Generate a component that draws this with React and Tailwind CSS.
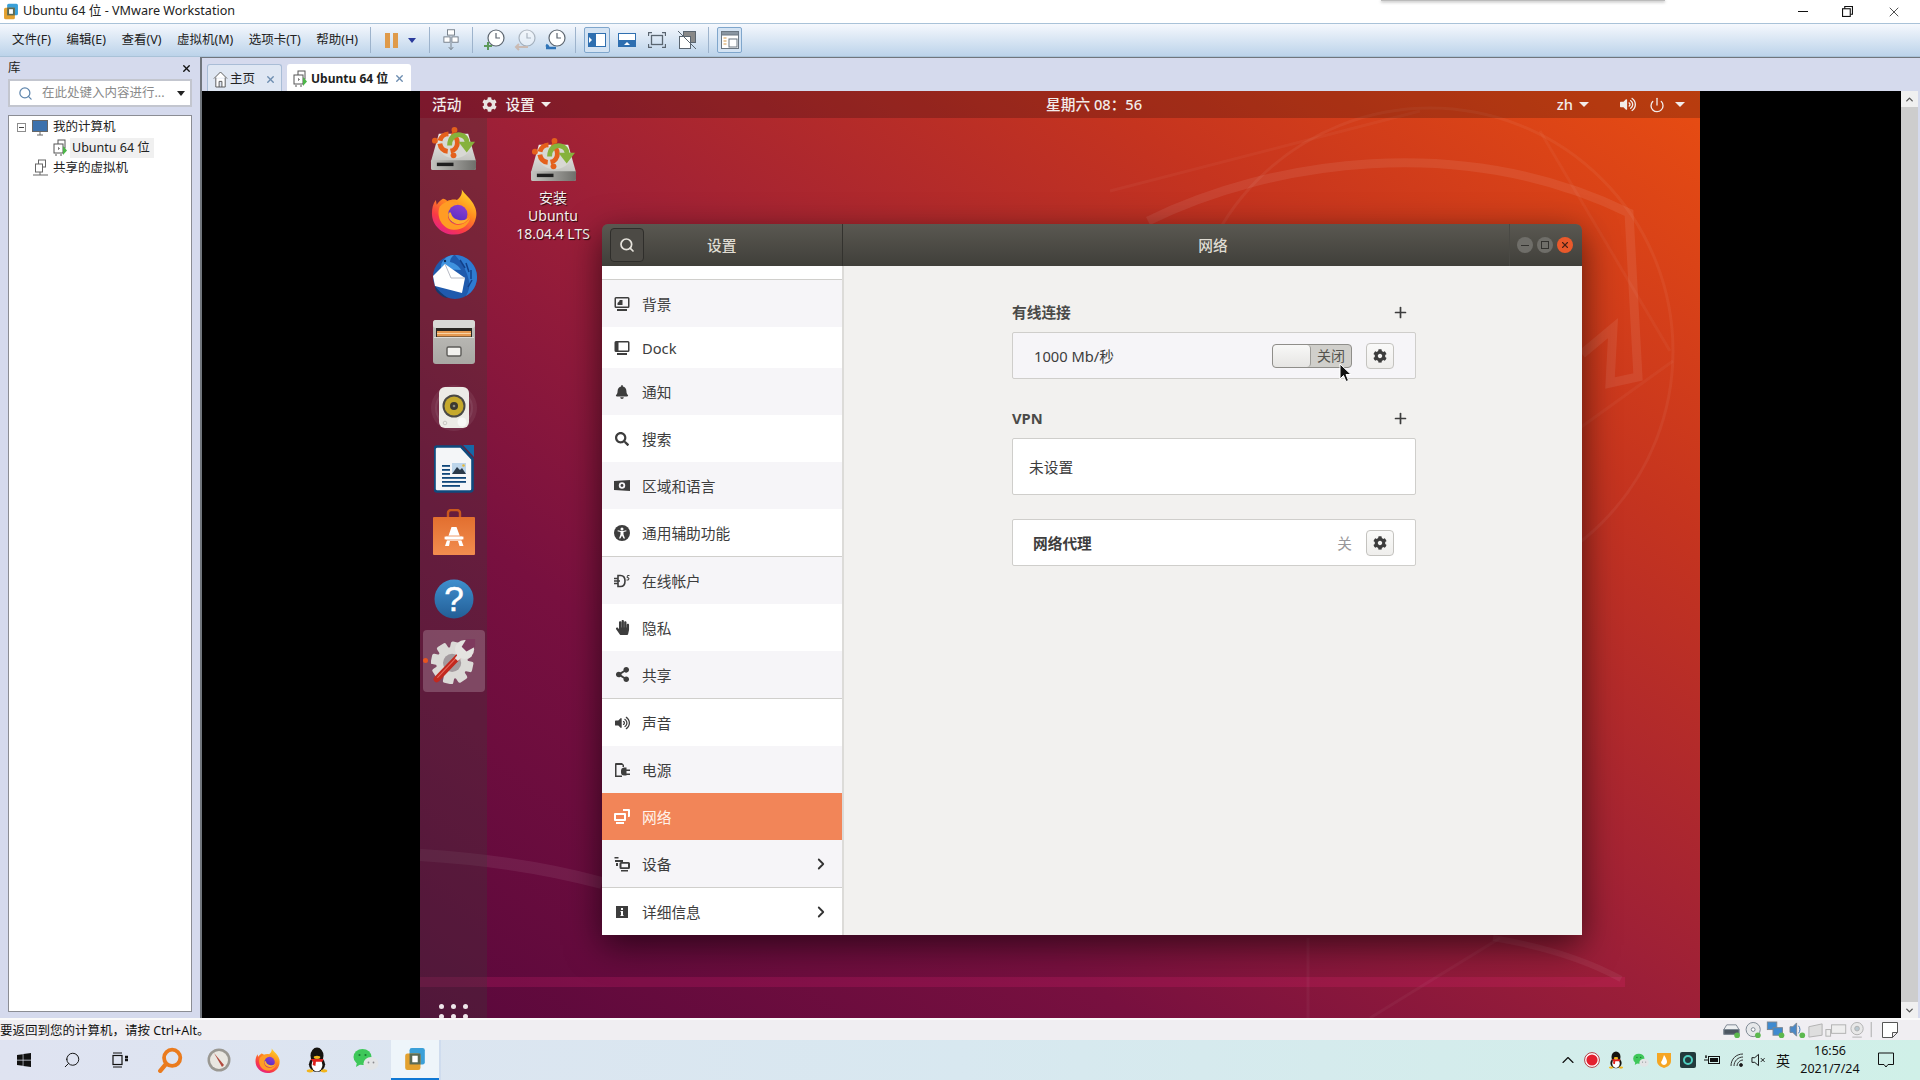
import React from "react";
import { FaBell, FaCog, FaHandPaper, FaSearch, FaShareAlt, FaVolumeUp, FaWindows } from "react-icons/fa";
import { ChevronDown, ChevronRight, ChevronUp, Plus, Power, Search, X } from "lucide-react";

// ---------- app icons (drawings) ----------
const DiskIcon = ({ className = "" }) => (
  <svg viewBox="0 0 48 46" className={className}>
    <defs>
      <linearGradient id="diskTop" x1="0" y1="0" x2="0" y2="1">
        <stop offset="0" stopColor="#efefed" />
        <stop offset="1" stopColor="#b4b4b0" />
      </linearGradient>
      <linearGradient id="diskBand" x1="0" y1="0" x2="1" y2="0">
        <stop offset="0" stopColor="#c4c4c0" />
        <stop offset="1" stopColor="#6f6f6b" />
      </linearGradient>
    </defs>
    <path d="M9 8h30l8 28v7a2 2 0 0 1-2 2H3a2 2 0 0 1-2-2v-7z" fill="url(#diskTop)" />
    <path d="M1 35h46v8a2 2 0 0 1-2 2H3a2 2 0 0 1-2-2z" fill="url(#diskBand)" />
    <path d="M7 37.500h17v3.500H7z" fill="#1f1f1f" />
    <ellipse cx="25" cy="21" rx="16" ry="12" fill="#d8d8d4" />
    <circle cx="19" cy="17" r="9" fill="none" stroke="#e4601c" strokeWidth="5" strokeDasharray="12 3" />
    <circle cx="5" cy="15" r="3" fill="#e4601c" />
    <circle cx="25" cy="4" r="3" fill="#e4601c" />
    <circle cx="24" cy="30" r="3" fill="#e4601c" />
    <path d="M20 20c0-8 5-12 11-11 5 1 7 5 7 9" fill="none" stroke="#86b23c" strokeWidth="5" />
    <path d="M29 16h17l-8.500 11z" fill="#86b23c" />
  </svg>
);

const FirefoxIcon = ({ className = "" }) => (
  <svg viewBox="0 0 48 48" className={className}>
    <defs>
      <linearGradient id="ffBody" x1="0.85" y1="0" x2="0.25" y2="1">
        <stop offset="0" stopColor="#ffdf2b" />
        <stop offset="0.42" stopColor="#ff8b1f" />
        <stop offset="0.75" stopColor="#f93b45" />
        <stop offset="1" stopColor="#e3208a" />
      </linearGradient>
      <linearGradient id="ffGlobe" x1="0.7" y1="0" x2="0.3" y2="1">
        <stop offset="0" stopColor="#8c3fd0" />
        <stop offset="1" stopColor="#4f2bc0" />
      </linearGradient>
    </defs>
    <path d="M32 1c3 5 8 8 11 13 4 6 5 11 4 16-2 11-11 18-23 18C11 48 1 38 1 26c0-5 1-10 4-14l1 5c2-3 4-5 6-6 1-1 4 1 5 2 3-1 7-2 10-1 4-3 6-7 5-11z" fill="url(#ffBody)" />
    <path d="M9 19c4-5 10-7 15-5 3 1 6 4 7 7-5-3-9-2-11 0 3 1 3 2 2 3-3 2-5 3-4 7 1 3 5 7 10 7 6 0 11-4 13-8-1 8-9 14-18 13C12 42 5 30 9 19z" fill="#ff9c24" />
    <circle cx="28" cy="27" r="10" fill="url(#ffGlobe)" />
    <path d="M18 27c0 6 6 10 11 10 6 0 10-4 12-9-2 4-7 6-11 5-5-1-8-3-9-7-1-2-2-1-3 1z" fill="#ffb02e" />
  </svg>
);

const ThunderbirdIcon = ({ className = "" }) => (
  <svg viewBox="0 0 48 48" className={className}>
    <circle cx="25" cy="25" r="22" fill="#1f5aad" />
    <path d="M25 3c12 0 22 10 22 22 0 8-4 15-11 19 3-5 4-10 3-15-2-10-7-18-14-26z" fill="#2f7bd1" />
    <path d="M30 8l5 8M36 11l3 9M41 18l0 9M42 28l-4 7" stroke="#11408a" strokeWidth="1.500" />
    <path d="M11 17c-1-7 5-14 13-14-3 2-4 5-4 7 5 1 9 4 11 8z" fill="#3f93df" />
    <circle cx="15" cy="9" r="1.200" fill="#0d2c5c" />
    <path d="M3 24L15 12l20 14-3 15-27-7z" fill="#fff" />
    <path d="M15 12l6 14 14 0" fill="none" stroke="#b7bac4" strokeWidth="1" />
    <path d="M5 34c3 4 8 9 13 12-3 0-7-2-10-5-2-2-3-4-3-7z" fill="#16396e" />
  </svg>
);

const FilesIcon = ({ className = "" }) => (
  <svg viewBox="0 0 42 44" className={className}>
    <defs>
      <linearGradient id="drawer" x1="0" y1="0" x2="0" y2="1">
        <stop offset="0" stopColor="#c0bfbb" />
        <stop offset="1" stopColor="#a9a8a4" />
      </linearGradient>
    </defs>
    <rect x="0" y="0" width="42" height="44" rx="3" fill="url(#drawer)" />
    <rect x="0" y="0" width="42" height="8" rx="3" fill="#d9d8d5" />
    <rect x="3" y="8" width="36" height="9" fill="#2a2622" />
    <rect x="4" y="11" width="34" height="5.500" fill="#e69a52" />
    <rect x="4" y="13" width="34" height="1" fill="#f7d3a6" />
    <rect x="1" y="17" width="40" height="1" fill="#dcdbd8" />
    <rect x="14" y="27" width="14" height="9" rx="1.500" fill="#f2f1ee" stroke="#5c5b58" strokeWidth="1.400" />
  </svg>
);

const SpeakerIcon = ({ className = "" }) => (
  <svg viewBox="0 0 48 48" className={className}>
    <circle cx="24" cy="24" r="23" fill="#ffffff" opacity="0.07" />
    <circle cx="24" cy="24" r="18" fill="none" stroke="#ffffff" strokeOpacity="0.08" strokeWidth="2" />
    <rect x="9" y="3" width="30" height="41" rx="6" fill="#ecebe6" />
    <circle cx="24" cy="22" r="11.500" fill="#4a4945" />
    <circle cx="24" cy="22" r="9.500" fill="#c5a92c" />
    <circle cx="24" cy="22" r="4" fill="#3a3830" />
    <circle cx="24" cy="22" r="1.300" fill="#8b8a80" />
    <circle cx="32" cy="38" r="4.500" fill="#f8f8f6" />
    <circle cx="15" cy="39" r="1.800" fill="none" stroke="#c8c7c2" />
  </svg>
);

const WriterIcon = ({ className = "" }) => (
  <svg viewBox="0 0 40 48" className={className}>
    <path d="M3 1.500h24L38.500 14v30a2.500 2.500 0 0 1-2.500 2.500H3A2.500 2.500 0 0 1 .5 44V4A2.500 2.500 0 0 1 3 1.500z" fill="#f4f6f8" stroke="#0f4a7d" strokeWidth="2.600" />
    <path d="M29 0h11v12z" fill="#1668a6" />
    <g fill="#10477a">
      <rect x="8" y="20" width="8" height="1.800" />
      <rect x="8" y="24" width="8" height="1.800" />
      <rect x="8" y="28" width="8" height="1.800" />
      <rect x="8" y="32" width="24" height="1.800" />
      <rect x="8" y="36" width="24" height="1.800" />
      <rect x="8" y="40" width="18" height="1.800" />
    </g>
    <rect x="18" y="18" width="14" height="11" fill="#bcd5ea" />
    <path d="M18 29l5-7 3 3 2-2 4 6z" fill="#2a3a4a" />
    <circle cx="29.500" cy="20.500" r="1.300" fill="#e6b93a" />
  </svg>
);

const StoreIcon = ({ className = "" }) => (
  <svg viewBox="0 0 42 46" className={className}>
    <defs>
      <linearGradient id="bag" x1="0" y1="0" x2="0" y2="1">
        <stop offset="0" stopColor="#e26f2f" />
        <stop offset="1" stopColor="#f28d4f" />
      </linearGradient>
    </defs>
    <path d="M15 11V4a3 3 0 0 1 3-3h6a3 3 0 0 1 3 3v7" fill="none" stroke="#c9581d" strokeWidth="2.400" />
    <rect x="0" y="8" width="42" height="38" rx="1" fill="url(#bag)" />
    <path d="M18.500 18h5l7 19h-4l-1.500-5h-8L16 37h-4z" fill="#fff" />
    <rect x="11" y="27" width="20" height="4" rx="2" fill="#fff" stroke="#ee8445" strokeWidth="0.800" />
  </svg>
);

const HelpIcon = ({ className = "" }) => (
  <svg viewBox="0 0 40 40" className={className}>
    <defs>
      <linearGradient id="helpBg" x1="0" y1="0" x2="0" y2="1">
        <stop offset="0" stopColor="#3f8fce" />
        <stop offset="1" stopColor="#235e96" />
      </linearGradient>
    </defs>
    <circle cx="20" cy="20" r="19.500" fill="url(#helpBg)" />
    <text x="20" y="32" textAnchor="middle" fontSize="35" stroke="#fff" strokeWidth="0.500" fill="#fff" fontFamily="Liberation Sans, sans-serif">?</text>
  </svg>
);

const SettingsIcon = ({ className = "" }) => (
  <svg viewBox="0 0 48 48" className={className}>
    <g fill="#dbdad7" transform="rotate(12 22 26)">
      <circle cx="22" cy="26" r="16.500" />
      <rect x="16.500" y="4" width="11" height="44" rx="2" />
      <rect x="0" y="20.500" width="44" height="11" rx="2" />
      <rect x="16.500" y="4" width="11" height="44" rx="2" transform="rotate(45 22 26)" />
      <rect x="16.500" y="4" width="11" height="44" rx="2" transform="rotate(-45 22 26)" />
    </g>
    <circle cx="22" cy="26" r="9.500" fill="#a39a9e" />
    <path d="M6 43L29 19" stroke="#c2291f" strokeWidth="6.500" strokeLinecap="round" />
    <path d="M7 41L27 20" stroke="#e8685c" strokeWidth="1.200" strokeLinecap="round" />
    <circle cx="35" cy="12" r="10" fill="#e4e3e0" />
    <path d="M29 16l-4 5 3 3 5-4z" fill="#e4e3e0" />
    <path d="M37 1l-5 8 5 5 9-5v-8z" fill="#7e3a5e" />
  </svg>
);

const VmIcon = ({ className = "" }) => (
  <svg viewBox="0 0 16 18" className={className}>
    <rect x="6" y="1" width="7" height="8" fill="#fff" stroke="#555" />
    <rect x="2" y="5" width="9" height="9" fill="#fff" stroke="#555" />
    <path d="M6 9.500h2M6.500 8v3" stroke="#777" strokeWidth="0.800" />
    <path d="M11 7l4 4.500-4 4.500z" fill="#4cb648" />
    <path d="M4 15v2M9 15v2" stroke="#555" />
  </svg>
);

const VmwareLogo = ({ className = "" }) => (
  <svg viewBox="0 0 20 22" className={className}>
    <rect x="5" y="1" width="14" height="15" rx="2" fill="#3aa0d8" />
    <rect x="1" y="6" width="14" height="15" rx="2" fill="#e3a12f" />
    <rect x="5" y="6" width="10" height="10" fill="#5a6a55" />
    <rect x="7.500" y="8" width="5" height="6" fill="#fff" />
  </svg>
);

const Penguin = ({ className = "" }) => (
  <svg viewBox="0 0 20 24" className={className}>
    <ellipse cx="10" cy="8" rx="6" ry="7.500" fill="#15130f" />
    <ellipse cx="10" cy="16" rx="7.500" ry="7" fill="#15130f" />
    <ellipse cx="10" cy="16.500" rx="5" ry="6" fill="#fff" />
    <path d="M4 11h12l-1 2.500H9l-.5 4-2.500-1 .5-3z" fill="#e0211c" />
    <ellipse cx="10" cy="9.500" rx="3" ry="1.400" fill="#f2b51b" />
    <ellipse cx="3.500" cy="22" rx="3" ry="1.500" fill="#f2b51b" />
    <ellipse cx="16.500" cy="22" rx="3" ry="1.500" fill="#f2b51b" />
  </svg>
);

const WeChat = ({ className = "" }) => (
  <svg viewBox="0 0 26 24" className={className}>
    <ellipse cx="9.500" cy="9" rx="9" ry="8" fill="#3ec85a" />
    <path d="M4 14l-1 5 5-3z" fill="#3ec85a" />
    <circle cx="6.500" cy="7" r="1.100" fill="#1c7a33" />
    <circle cx="12.500" cy="7" r="1.100" fill="#1c7a33" />
    <ellipse cx="18" cy="15.500" rx="7.500" ry="6.500" fill="#e3e5e6" />
    <circle cx="15.500" cy="14.500" r="0.900" fill="#8b8d90" />
    <circle cx="20.500" cy="14.500" r="0.900" fill="#8b8d90" />
  </svg>
);

// ---------- gnome sidebar glyphs ----------
const Glyph = ({ name, color = "#3d3d3d" }) => {
  const c = "h-[16px] w-[16px]";
  if (name === "bg")
    return (
      <svg viewBox="0 0 16 16" className={c} fill={color}>
        <path d="M2 1h12a1.500 1.500 0 0 1 1.500 1.500v8A1.500 1.500 0 0 1 14 12H2a1.500 1.500 0 0 1-1.500-1.500v-8A1.500 1.500 0 0 1 2 1zm0 1.500v8h12v-8z" />
        <path d="M3.500 9V7l2-2V4h3v5z" />
        <rect x="3" y="13" width="10" height="2" />
      </svg>
    );
  if (name === "dock")
    return (
      <svg viewBox="0 0 16 16" className={c} fill={color}>
        <path d="M2 1h12a1.500 1.500 0 0 1 1.500 1.500v8A1.500 1.500 0 0 1 14 12H2a1.500 1.500 0 0 1-1.500-1.500v-8A1.500 1.500 0 0 1 2 1zm2.500 1.500v8H14v-8z" />
        <rect x="3" y="13" width="10" height="2" />
      </svg>
    );
  if (name === "bell") return <FaBell className="h-[14px] w-[14px]" color={color} />;
  if (name === "search") return <FaSearch className="h-[14px] w-[14px]" color={color} />;
  if (name === "region")
    return (
      <svg viewBox="0 0 16 16" className={c} fill={color}>
        <path d="M0 3l16-1v11l-16-1z" />
        <circle cx="8" cy="7.500" r="3.200" fill="#f6f5f8" />
        <circle cx="8" cy="7.500" r="1.400" fill={color} />
      </svg>
    );
  if (name === "a11y")
    return (
      <svg viewBox="0 0 16 16" className={c}>
        <circle cx="8" cy="8" r="8" fill={color} />
        <circle cx="8" cy="4" r="1.500" fill="#fff" />
        <path d="M3.500 6.200l3 .8v2.500l-1.500 4h1.400L8 10.500l1.600 3H11l-1.500-4V7l3-.8-.3-1-3.200.8H7L3.800 5.200z" fill="#fff" />
      </svg>
    );
  if (name === "online")
    return (
      <svg viewBox="0 0 16 16" className={c} fill="none" stroke={color}>
        <path d="M4 2.500h2.500c3 0 4.500 2.500 4.500 5.500s-1.500 5.500-4.500 5.500H4z" strokeWidth="1.600" />
        <path d="M0 5.500h4M0 8h6M0 10.500h4" strokeWidth="1.300" />
        <path d="M15.500 2.500h-2l-.5 2 2 .5-.5 2h-2" strokeWidth="1" />
      </svg>
    );
  if (name === "hand") return <FaHandPaper className="h-[15px] w-[15px]" color={color} />;
  if (name === "share") return <FaShareAlt className="h-[15px] w-[15px]" color={color} />;
  if (name === "sound") return <FaVolumeUp className="h-[14px] w-[15px]" color={color} />;
  if (name === "power")
    return (
      <svg viewBox="0 0 16 16" className={c} fill={color}>
        <path d="M2 1h6l2 2v2H8.500V3H2.500v10.500H8V15H1V2a1 1 0 0 1 1-1z" />
        <path d="M10 5.500h2.500v2H16V9h-3.500v2.500H16V13h-3.500v.5H10a3 3 0 0 1-3-3V9a3.500 3.500 0 0 1 3-3.500z" />
      </svg>
    );
  if (name === "network")
    return (
      <svg viewBox="0 0 16 16" className={c} fill={color}>
        <path d="M9 0h6a1 1 0 0 1 1 1v6a1 1 0 0 1-1 1h-1V2H9z" />
        <path d="M1 4h10a1 1 0 0 1 1 1v6a1 1 0 0 1-1 1H1a1 1 0 0 1-1-1V5a1 1 0 0 1 1-1zm1 2v4h8V6z" />
        <rect x="2" y="13" width="8" height="2" />
      </svg>
    );
  if (name === "devices")
    return (
      <svg viewBox="0 0 16 16" className={c} fill={color}>
        <rect x="0.500" y="1" width="4" height="1.500" />
        <rect x="1" y="4" width="8" height="2" />
        <rect x="2" y="7" width="2" height="3" />
        <path d="M7 6h7.500A1.500 1.500 0 0 1 16 7.500v4a1.500 1.500 0 0 1-1.500 1.500H7a1.500 1.500 0 0 1-1.500-1.500v-4A1.500 1.500 0 0 1 7 6zm.5 1.800v3.400h6.500V7.800z" />
        <rect x="7" y="14" width="7" height="1.500" />
      </svg>
    );
  return (
    <svg viewBox="0 0 16 16" className={c} fill={color}>
      <path d="M2 2h12v12H2zM7 4v2h2V4zm-.5 3v1H7v3h-.5v1h3v-1H9V7z" fillRule="evenodd" />
    </svg>
  );
};

const sidebarRows = [
  { icon: "bg", label: "背景", bg: "gray" },
  { icon: "dock", label: "Dock", short: true },
  { icon: "bell", label: "通知", bg: "gray" },
  { icon: "search", label: "搜索" },
  { icon: "region", label: "区域和语言", bg: "gray" },
  { icon: "a11y", label: "通用辅助功能" },
  { icon: "online", label: "在线帐户", bg: "gray", divider: true },
  { icon: "hand", label: "隐私" },
  { icon: "share", label: "共享", bg: "gray" },
  { icon: "sound", label: "声音", divider: true },
  { icon: "power", label: "电源", bg: "gray" },
  { icon: "network", label: "网络", active: true },
  { icon: "devices", label: "设备", bg: "gray", arrow: true },
  { icon: "info", label: "详细信息", arrow: true, divider: true },
];

const SidebarRow = ({ row }) => (
  <div
    className={`flex shrink-0 items-center ${row.short ? "h-[41px]" : "h-[47px]"} ${row.divider ? "box-content border-t border-[#d0cfcc]" : ""} ${
      row.active ? "bg-[#f28558] text-[#fff3ec]" : row.bg === "gray" ? "bg-[#f6f5f8] text-[#3d3d3d]" : "bg-white text-[#3d3d3d]"
    }`}
  >
    <span className="ml-[12px] flex w-[16px] justify-center">
      <Glyph name={row.icon} color={row.active ? "#ffffff" : "#3d3d3d"} />
    </span>
    <span className="ml-[12px] flex-1 pt-[1px] text-[14.7px] leading-none">{row.label}</span>
    {row.arrow && <ChevronRight className="mr-[12px] h-[18px] w-[18px] text-[#333]" strokeWidth={2.4} />}
  </div>
);

const GearButton = () => (
  <span className="flex h-[26px] w-[28px] items-center justify-center rounded-[4px] border border-[#c4c3bf] bg-gradient-to-b from-[#fafaf9] to-[#efeeec]">
    <FaCog className="h-[14px] w-[14px] text-[#3d3d3d]" />
  </span>
);

const SectionHead = ({ label }) => (
  <div className="flex h-[20px] items-center justify-between pr-[7px] text-[14.7px] font-bold text-[#4a4a48]">
    <span>{label}</span>
    <Plus className="h-[17px] w-[17px] text-[#3d3d3d]" strokeWidth={2.4} />
  </div>
);

// ---------- guest desktop ----------
const SettingsWindow = () => (
  <div className="absolute left-[182px] top-[133px] flex h-[711px] w-[980px] flex-col overflow-hidden rounded-t-[6px] shadow-[0_10px_35px_rgba(0,0,0,0.6)]">
    <div className="flex h-[42px] shrink-0 items-center bg-gradient-to-b from-[#5a5851] to-[#403f3a] text-[#dfdbd2]">
      <div className="flex h-full w-[241px] items-center border-r border-[#33322e] pl-[8px]">
        <span className="flex h-[34px] w-[34px] items-center justify-center rounded-[4px] border border-[#2f2e2b] bg-[#4c4a45]">
          <Search className="h-[16px] w-[16px] text-[#e6e3dc]" strokeWidth={2.6} />
        </span>
        <span className="ml-[63px] text-[14.7px] font-medium">设置</span>
      </div>
      <div className="flex flex-1 justify-center pl-[0px] pr-[0px] text-[14.7px] font-medium">
        <span className="ml-[74px]">网络</span>
      </div>
      <div className="flex h-full items-center gap-[4px] border-l border-[#4a4944] pl-[7px] pr-[9px]">
        <span className="flex h-[16px] w-[16px] items-center justify-center rounded-full bg-[#6f6e69]">
          <span className="h-px w-[8px] bg-[#33322f]" />
        </span>
        <span className="flex h-[16px] w-[16px] items-center justify-center rounded-full bg-[#6f6e69]">
          <span className="h-[8px] w-[8px] border border-[#33322f]" />
        </span>
        <span className="flex h-[16px] w-[16px] items-center justify-center rounded-full bg-[#e9592b]">
          <X className="h-[10px] w-[10px] text-[#4a2115]" strokeWidth={2.6} />
        </span>
      </div>
    </div>
    <div className="flex min-h-0 flex-1">
      <div className="flex w-[240px] shrink-0 flex-col bg-white">
        <div className="box-content h-[13px] shrink-0 border-b border-[#d0cfcc]" />
        {sidebarRows.map((row) => (
          <SidebarRow key={row.label} row={row} />
        ))}
      </div>
      <div className="w-[2px] shrink-0 bg-[#dcdbd8]" />
      <div className="flex-1 bg-[#f2f1ef] pl-[168px] pt-[36px]">
        <div className="w-[404px] text-[14.7px] text-[#3d3d3d]">
          <SectionHead label="有线连接" />
          <div className="relative mt-[10px] flex h-[47px] items-center rounded-[2px] border border-[#cfcecb] bg-[#f6f5f8] pl-[21px] pr-[21px]">
            <span className="flex-1 pt-[1px]">1000 Mb/秒</span>
            <div className="mr-[14px] flex h-[24px] w-[80px] overflow-hidden rounded-[4px] border border-[#8f8e8a] bg-[#d0cfcb]">
              <span className="h-full w-[38px] rounded-[4px] border-r border-[#9c9b97] bg-gradient-to-b from-[#f8f8f7] to-[#e6e5e3]" />
              <span className="flex-1 text-center text-[14px] leading-[22px] text-[#55544f]">关闭</span>
            </div>
            <GearButton />
            <svg viewBox="0 0 13 20" className="absolute left-[326px] top-[30px] h-[20px] w-[13px]">
              <path d="M1 1v15l3.500-3.500 2.500 6 2.500-1-2.500-6h5z" fill="#111" stroke="#fff" strokeWidth="1" />
            </svg>
          </div>
          <div className="mt-[29px]">
            <SectionHead label="VPN" />
          </div>
          <div className="mt-[10px] flex h-[57px] items-center rounded-[2px] border border-[#cfcecb] bg-white pl-[16px] pt-[1px]">未设置</div>
          <div className="mt-[24px] flex h-[47px] items-center rounded-[2px] border border-[#cfcecb] bg-white pl-[20px] pr-[21px]">
            <span className="flex-1 pt-[1px] font-bold">网络代理</span>
            <span className="mr-[14px] pt-[1px] text-[#98979a]">关</span>
            <GearButton />
          </div>
        </div>
      </div>
    </div>
  </div>
);

const GuestScreen = () => (
  <div className="relative flex h-full w-[1280px] shrink-0 flex-col overflow-hidden bg-[linear-gradient(216deg,#e84d12_0%,#c5341f_24%,#9c1f38_50%,#78103f_72%,#5a083c_100%)] text-white">
    <svg viewBox="0 0 1280 927" className="absolute inset-0 h-full w-full" fill="none">
      <path d="M728 130C850 70 1040 40 1209 122L1218 286L1190 292L1193 237L1162 263" stroke="#ffffff" strokeOpacity="0.08" strokeWidth="9" />
      <circle cx="1010" cy="260" r="243" stroke="#ffffff" strokeOpacity="0.05" strokeWidth="3" />
      <path d="M690 100L1000 20M1120 40L1250 260M1253 270L1100 380" stroke="#ffffff" strokeOpacity="0.04" strokeWidth="3" />
      <path d="M0 891L1205 891" stroke="#ff2a80" strokeOpacity="0.17" strokeWidth="10" />
      <path d="M1073 847Q1150 860 1201 888" stroke="#ffffff" strokeOpacity="0.06" strokeWidth="6" />
      <path d="M888 847V927M1080 847L950 927" stroke="#ffffff" strokeOpacity="0.04" strokeWidth="3" />
      <path d="M0 764Q100 770 182 792" stroke="#ffffff" strokeOpacity="0.07" strokeWidth="12" />
    </svg>
    <div className="relative flex h-[27px] shrink-0 items-center bg-black/20 pl-[12px] text-[14.7px] font-medium text-[#f2ecea]">
      <span>活动</span>
      <FaCog className="ml-[21px] h-[15px] w-[15px] text-[#e9e4e2]" />
      <span className="ml-[8px]">设置</span>
      <span className="ml-[6px] h-0 w-0 border-x-[5px] border-t-[5px] border-x-transparent border-t-[#f2ecea]" />
      <span className="absolute left-[626px]">星期六 08：56</span>
      <span className="ml-auto">zh</span>
      <span className="ml-[6px] h-0 w-0 border-x-[5px] border-t-[5px] border-x-transparent border-t-[#f2ecea]" />
      <FaVolumeUp className="ml-[31px] h-[15px] w-[16px]" />
      <Power className="ml-[13px] h-[16px] w-[16px]" strokeWidth={2} />
      <span className="ml-[10px] mr-[15px] h-0 w-0 border-x-[5px] border-t-[5px] border-x-transparent border-t-[#f2ecea]" />
    </div>
    <div className="relative flex min-h-0 flex-1">
      <div className="flex w-[67px] shrink-0 flex-col items-center overflow-hidden bg-[#3c3b37]/30">
        <div className="mt-[7px] flex h-[46px] items-center"><DiskIcon className="h-[45px] w-[47px]" /></div>
        <div className="mt-[16px] flex h-[48px] items-center"><FirefoxIcon className="h-[47px] w-[46px]" /></div>
        <div className="mt-[17px] flex h-[48px] items-center"><ThunderbirdIcon className="h-[48px] w-[48px]" /></div>
        <div className="mt-[20px] flex h-[44px] items-center"><FilesIcon className="h-[44px] w-[42px]" /></div>
        <div className="mt-[20px] flex h-[48px] items-center"><SpeakerIcon className="h-[48px] w-[48px]" /></div>
        <div className="mt-[13px] flex h-[48px] items-center"><WriterIcon className="h-[48px] w-[40px]" /></div>
        <div className="mt-[16px] flex h-[46px] items-center"><StoreIcon className="h-[46px] w-[42px]" /></div>
        <div className="mt-[24px] flex h-[40px] items-center"><HelpIcon className="h-[40px] w-[40px]" /></div>
        <div className="relative mt-[11px] flex h-[62px] w-[62px] items-center justify-center rounded-[4px] bg-white/20">
          <SettingsIcon className="h-[46px] w-[46px]" />
          <span className="absolute left-[0px] top-[28px] h-[5px] w-[5px] rounded-full bg-[#e9541f]" />
        </div>
        <div className="mt-auto grid h-[14px] w-[29px] grid-cols-3 gap-x-[7px] gap-y-[5px] overflow-hidden">
          {[0, 1, 2, 3, 4, 5].map((d) => (
            <span key={d} className="h-[5px] w-[5px] rounded-full bg-[#efe6ea]" />
          ))}
        </div>
      </div>
      <div className="absolute left-[88px] top-[19px] flex w-[90px] flex-col items-center text-[14px] leading-[18px] text-[#f5f0ee] [text-shadow:1px_1px_1px_rgba(0,0,0,0.8)]">
        <DiskIcon className="mb-[7px] h-[45px] w-[47px]" />
        <span>安装</span>
        <span>Ubuntu</span>
        <span className="whitespace-nowrap">18.04.4 LTS</span>
      </div>
    </div>
    <SettingsWindow />
  </div>
);

// ---------- vmware chrome ----------
const ClockTool = ({ badge, dim }) => (
  <svg viewBox="0 0 24 26" className={`h-[26px] w-[24px] ${dim ? "opacity-40" : ""}`} fill="none" stroke="#5d6670" strokeWidth="1.200">
    <circle cx="13" cy="11" r="8" fill="#fff" />
    <path d="M13 6v5h4" />
    {badge === "plus" && <path d="M5 15v8M1 19h8" stroke="#5d9a5b" strokeWidth="2" />}
    {badge === "back" && <path d="M2 20h12M5 17l-3 3 3 3" stroke="#c8875a" strokeWidth="2" />}
    {badge === "wrench" && <path d="M2 21h10M2 18c2 1 3 2 2 4" stroke="#2f74b8" strokeWidth="2.600" />}
  </svg>
);

const Toolbar = () => (
  <div className="flex h-[34px] shrink-0 items-center border-y border-[#a9c2d8] bg-gradient-to-b from-[#f5f8fd] to-[#bcd3ea] pl-[12px] text-[12.5px] text-[#222]">
    <span>文件(F)</span>
    <span className="ml-[15.500px]">编辑(E)</span>
    <span className="ml-[15.500px]">查看(V)</span>
    <span className="ml-[15.500px]">虚拟机(M)</span>
    <span className="ml-[15.500px]">选项卡(T)</span>
    <span className="ml-[15.500px]">帮助(H)</span>
    <span className="ml-[12px] h-[26px] w-px bg-[#9db3cc]" />
    <span className="ml-[14px] h-[15px] w-[5px] bg-[#df9a4a]" />
    <span className="ml-[3px] h-[15px] w-[5px] bg-[#df9a4a]" />
    <span className="ml-[10px] h-0 w-0 border-x-[4px] border-t-[5px] border-x-transparent border-t-[#2a3a9c]" />
    <span className="ml-[13px] h-[26px] w-px bg-[#9db3cc]" />
    <svg viewBox="0 0 18 26" className="ml-[13px] h-[26px] w-[16px]" fill="#fff" stroke="#6c7680">
      <rect x="5" y="1.500" width="8" height="6" />
      <rect x="1" y="9.500" width="7" height="6" />
      <rect x="10" y="9.500" width="7" height="6" />
      <path d="M9 16v7M6.500 21L9 24l2.500-3" fill="none" />
    </svg>
    <span className="ml-[13px] h-[26px] w-px bg-[#9db3cc]" />
    <span className="ml-[10px] flex items-center gap-[6.500px]">
      <ClockTool badge="plus" />
      <ClockTool badge="back" dim />
      <ClockTool badge="wrench" />
    </span>
    <span className="ml-[7px] h-[26px] w-px bg-[#9db3cc]" />
    <span className="ml-[8px] flex h-[26px] w-[26px] items-center justify-center rounded-[2px] border border-[#7fa6cc] bg-[#d4e3f3]">
      <span className="flex h-[14px] w-[18px] items-center border border-[#2f6fb0] bg-white">
        <span className="flex h-full w-[7px] items-center bg-[#2f6fb0]">
          <span className="h-0 w-0 border-y-[3px] border-l-[3px] border-y-transparent border-l-white" />
        </span>
      </span>
    </span>
    <span className="ml-[8px] flex h-[14px] w-[18px] flex-col items-center justify-end border border-[#2f6fb0] bg-white">
      <span className="flex h-[6px] w-full items-center justify-center bg-[#2f6fb0]">
        <span className="h-0 w-0 border-x-[3px] border-b-[3px] border-x-transparent border-b-white" />
      </span>
    </span>
    <svg viewBox="0 0 18 16" className="ml-[12px] h-[16px] w-[18px]" fill="none" stroke="#5a6570" strokeWidth="1.300">
      <rect x="3.500" y="3.500" width="11" height="9" />
      <path d="M0.500 4V0.500H4M14 0.500h3.500V4M17.500 12v3.500H14M4 15.500H0.500V12" />
    </svg>
    <svg viewBox="0 0 18 18" className="ml-[12px] h-[18px] w-[18px]" fill="#fff" stroke="#5a6570">
      <rect x="5.500" y="0.500" width="12" height="11" fill="#888" />
      <rect x="1.500" y="5.500" width="11" height="12" />
      <path d="M0 0l18 18" />
    </svg>
    <span className="ml-[12px] h-[26px] w-px bg-[#9db3cc]" />
    <span className="ml-[8px] flex h-[26px] w-[25px] items-center justify-center rounded-[2px] border border-[#7fa6cc] bg-[#d4e3f3]">
      <svg viewBox="0 0 18 18" className="h-[18px] w-[18px]" fill="#fff" stroke="#6a7682">
        <rect x="0.500" y="0.500" width="17" height="17" />
        <rect x="0.500" y="0.500" width="17" height="3.500" fill="#8a96a2" />
        <path d="M2.500 7h3M2.500 10h3M2.500 13h3" stroke="#d59a4a" />
        <rect x="8" y="8" width="8" height="8" />
      </svg>
    </span>
  </div>
);

const Library = () => (
  <div className="flex w-[200px] shrink-0 flex-col bg-[#d5daed] pl-[8px] pr-[8px] text-[12.5px] text-[#222]">
    <div className="flex h-[22px] shrink-0 items-center">
      <span className="flex-1">库</span>
      <X className="h-[11px] w-[11px] text-[#111]" strokeWidth={3} />
    </div>
    <div className="flex h-[28px] shrink-0 items-center border-2 border-[#c3c6cf] bg-white pl-[8px] pr-[5px] text-[#8a8a8a]">
      <Search className="h-[15px] w-[15px] text-[#5f86ad]" strokeWidth={2} />
      <span className="ml-[9px] flex-1 whitespace-nowrap">在此处键入内容进行...</span>
      <span className="h-0 w-0 border-x-[4px] border-t-[5px] border-x-transparent border-t-[#222]" />
    </div>
    <div className="mb-[6px] mt-[8px] flex-1 border border-[#8b8d94] bg-white pt-[1px]">
      <div className="flex h-[21px] items-center pl-[8px]">
        <span className="flex h-[9px] w-[9px] items-center justify-center border border-[#8d8d8d]">
          <span className="h-px w-[5px] bg-[#444]" />
        </span>
        <svg viewBox="0 0 16 16" className="ml-[6px] h-[16px] w-[16px]" fill="#3d72ad" stroke="#666">
          <rect x="0.500" y="0.500" width="15" height="11" />
          <path d="M5 15h6M8 12v3" fill="none" />
        </svg>
        <span className="ml-[5px]">我的计算机</span>
      </div>
      <div className="flex h-[20px] items-center pl-[43px]">
        <VmIcon className="h-[18px] w-[16px]" />
        <span className="ml-[2px] flex h-[20px] items-center bg-[#f0f0f0] pl-[2px] pr-[4px]">Ubuntu 64 位</span>
      </div>
      <div className="flex h-[20px] items-center pl-[24px]">
        <svg viewBox="0 0 16 18" className="h-[18px] w-[16px]" fill="#fff" stroke="#666">
          <rect x="5.500" y="1" width="7" height="7" />
          <rect x="2.500" y="5" width="7" height="8" />
          <path d="M0 16h15M7 13v3" fill="none" />
        </svg>
        <span className="ml-[4px]">共享的虚拟机</span>
      </div>
    </div>
  </div>
);

const Tabs = () => (
  <div className="flex h-[33px] shrink-0 items-end bg-[#d5daed] pl-[5px] text-[12.5px] text-[#222]">
    <div className="flex h-[27px] w-[75px] items-center rounded-t-[3px] border border-b-0 border-[#a9bdd6] bg-[#dfe7f3] pl-[5px] pt-[2px]">
      <svg viewBox="0 0 16 18" className="h-[17px] w-[15px]" fill="#fff" stroke="#555">
        <path d="M1 8l7-7 7 7M3 7v10h10V7M6.500 17v-6h3v6" />
      </svg>
      <span className="ml-[2px] flex-1">主页</span>
      <X className="mr-[5px] h-[11px] w-[11px] text-[#6d8db0]" strokeWidth={3} />
    </div>
    <div className="ml-[5px] flex h-[27px] w-[124px] items-center rounded-t-[3px] bg-white pl-[5px] pt-[2px] text-[12px] font-bold">
      <VmIcon className="h-[18px] w-[16px]" />
      <span className="ml-[3px] flex-1 whitespace-nowrap">Ubuntu 64 位</span>
      <X className="mr-[6px] h-[11px] w-[11px] text-[#6d8db0]" strokeWidth={3} />
    </div>
  </div>
);

const Scrollbar = () => (
  <div className="flex w-[17px] shrink-0 flex-col bg-[#f0f0f0]">
    <div className="flex h-[16px] items-center justify-center">
      <ChevronUp className="h-[11px] w-[11px] text-[#555]" strokeWidth={3} />
    </div>
    <div className="flex-1 bg-[#cdcdcd]" />
    <div className="flex h-[16px] items-center justify-center">
      <ChevronDown className="h-[11px] w-[11px] text-[#555]" strokeWidth={3} />
    </div>
  </div>
);

const StatusBar = () => (
  <div className="flex h-[20px] shrink-0 items-center bg-[#f0eef2] text-[12.5px] text-[#111]">
    <span className="flex-1 pt-[3px]">要返回到您的计算机，请按 Ctrl+Alt。</span>
    <svg viewBox="0 0 162 20" className="mr-[7px] h-[19px] w-[153px]" fill="#dfe3e8" stroke="#7a8590">
      <path d="M2 9l3-5h10l3 5v5H2z" fill="#eef0f2" />
      <rect x="2" y="9" width="16" height="5" fill="#4b5560" />
      <circle cx="16" cy="15" r="3" fill="#5cb84e" stroke="none" />
      <circle cx="33" cy="9" r="7.500" fill="#e6e8ea" />
      <circle cx="33" cy="9" r="2" fill="#fff" />
      <circle cx="38" cy="15" r="3" fill="#5cb84e" stroke="none" />
      <rect x="48" y="1" width="10" height="8" fill="#3e8ad0" />
      <rect x="54" y="7" width="10" height="8" fill="#3e8ad0" />
      <circle cx="63" cy="15" r="3" fill="#5cb84e" stroke="none" />
      <path d="M72 6h3l4-4v14l-4-4h-3z" fill="#4a88c6" />
      <path d="M81 5c2 2 2 6 0 8" fill="none" stroke="#2f6fb0" />
      <circle cx="85" cy="15" r="3" fill="#5cb84e" stroke="none" />
      <path d="M92 6l14-3v12l-14 2z" fill="#dedede" stroke="#b0b0b0" />
      <rect x="116" y="4" width="15" height="9" fill="#eee" stroke="#b0b0b0" />
      <rect x="110" y="9" width="5" height="7" fill="#eee" stroke="#b0b0b0" />
      <circle cx="143" cy="8" r="6.500" fill="#e8e8e8" stroke="#b0b0b0" />
      <circle cx="143" cy="8" r="2.500" fill="#b8c8d0" stroke="#b0b0b0" />
      <path d="M138 17h10" stroke="#b0b0b0" />
      <path d="M158 1v16" stroke="#a8a8a8" />
    </svg>
    <svg viewBox="0 0 16 16" className="mr-[22px] h-[16px] w-[16px]" fill="#fff" stroke="#555">
      <path d="M0.500 0.500h15v10l-5 5h-10zM15.500 10.500h-5v5" />
    </svg>
  </div>
);

const Taskbar = () => (
  <div className="flex h-[40px] shrink-0 items-center bg-gradient-to-r from-[#dfe3f1] via-[#d8e8f0] to-[#d0f0e8] text-[#111]">
    <span className="flex w-[48px] justify-center"><FaWindows className="h-[16px] w-[16px] text-[#111]" /></span>
    <span className="flex w-[48px] justify-center"><Search className="h-[18px] w-[18px] -scale-x-100" strokeWidth={1.3} /></span>
    <span className="flex w-[48px] justify-center">
      <svg viewBox="0 0 16 16" className="h-[16px] w-[16px]" fill="none" stroke="#111" strokeWidth="1.200">
        <rect x="1" y="3.500" width="9" height="9" />
        <path d="M1 1h9M1 15h9" />
        <path d="M13 5h3M13 8h3" strokeWidth="2.500" />
      </svg>
    </span>
    <span className="flex w-[51px] justify-center">
      <svg viewBox="0 0 24 24" className="h-[26px] w-[26px]" fill="none">
        <circle cx="14" cy="10" r="7.500" stroke="#ea7b1e" strokeWidth="3.500" />
        <path d="M8 16l-5 6" stroke="#ea7b1e" strokeWidth="4" strokeLinecap="round" />
      </svg>
    </span>
    <span className="flex w-[48px] justify-center">
      <svg viewBox="0 0 24 24" className="h-[24px] w-[24px]">
        <circle cx="12" cy="12" r="11.500" fill="#9a9892" />
        <circle cx="12" cy="12" r="9" fill="#e9e7e1" />
        <path d="M7 5l8 14 2-2z" fill="#b24a3e" />
      </svg>
    </span>
    <span className="flex w-[49px] justify-center"><FirefoxIcon className="h-[25px] w-[25px]" /></span>
    <span className="flex w-[50px] justify-center"><Penguin className="h-[26px] w-[22px]" /></span>
    <span className="flex w-[47px] justify-center"><WeChat className="h-[24px] w-[26px]" /></span>
    <span className="ml-[2px] flex h-full w-[48px] items-center justify-center border-b-[2px] border-[#0f78d4] bg-[#eef5fa]">
      <VmwareLogo className="h-[24px] w-[22px]" />
    </span>
    <span className="h-full w-[2px] bg-[#cfdcee]" />
    <span className="ml-auto flex h-full items-center pr-[1px]">
      <ChevronUp className="h-[20px] w-[20px]" strokeWidth={1.4} />
      <svg viewBox="0 0 16 16" className="ml-[6.500px] h-[16px] w-[16px]">
        <circle cx="8" cy="8" r="7.400" fill="#fff" stroke="#b23c44" />
        <circle cx="8" cy="8" r="5.600" fill="#e3202f" />
      </svg>
      <Penguin className="ml-[8px] h-[18px] w-[16px]" />
      <WeChat className="ml-[7.500px] h-[15px] w-[18px]" />
      <svg viewBox="0 0 14 16" className="ml-[7.500px] h-[16px] w-[14px]">
        <path d="M0 1h14v8c0 4-4 6-7 7-3-1-7-3-7-7z" fill="#f5a623" />
        <path d="M7 3c2 3 3 5 3 7s-2 3-3 3-3-1-3-3c1-1 2-4 3-7z" fill="#fff" />
      </svg>
      <span className="ml-[9px] flex h-[16px] w-[16px] items-center justify-center rounded-[2px] bg-[#223a3c]">
        <span className="h-[10px] w-[10px] rounded-full border-2 border-[#4fcfc0]" />
      </span>
      <svg viewBox="0 0 16 12" className="ml-[8px] h-[12px] w-[16px]" fill="none" stroke="#111">
        <rect x="4.500" y="2.500" width="11" height="7" />
        <rect x="6" y="4" width="8" height="4" fill="#111" stroke="none" />
        <path d="M0 6h4M2 1v3M1 3h2" />
      </svg>
      <svg viewBox="0 0 14 14" className="ml-[10px] h-[14px] w-[14px]" fill="none" stroke="#333">
        <path d="M1 13C1 6 6 1 13 1M4 13c0-5 4-9 9-9M7 13c0-3 3-6 6-6" />
        <circle cx="11" cy="12" r="1.500" fill="#111" />
      </svg>
      <svg viewBox="0 0 16 14" className="ml-[7px] h-[14px] w-[15px]" fill="none" stroke="#111">
        <path d="M1 4.500h3L8 1v12L4 9.500H1z" />
        <path d="M10.500 5l4 4M14.500 5l-4 4" />
      </svg>
      <span className="ml-[10px] text-[14px]">英</span>
      <span className="ml-[10px] flex w-[60px] flex-col items-center text-[12.5px] leading-[18px]">
        <span>16:56</span>
        <span>2021/7/24</span>
      </span>
      <span className="ml-[18px] mr-[25px]">
        <svg viewBox="0 0 16 16" className="h-[16px] w-[16px]" fill="none" stroke="#111">
          <path d="M0.500 1h15v11.500H10L8 15l-2-2.500H0.500z" />
        </svg>
      </span>
    </span>
  </div>
);

export default function App() {
  return (
    <div className="relative flex h-[1080px] w-[1920px] flex-col overflow-hidden bg-white font-['Noto_Sans','Noto_Sans_CJK_SC',sans-serif]">
      <div className="absolute left-[1381px] top-0 h-px w-[284px] bg-[#bbb] shadow-[0_1px_3px_rgba(0,0,0,0.5)]" />
      <div className="flex h-[23px] shrink-0 items-center pl-[3px] text-[12.600px] text-[#222]">
        <VmwareLogo className="h-[17px] w-[16px]" />
        <span className="ml-[4px] flex-1">Ubuntu 64 位 - VMware Workstation</span>
        <span className="h-px w-[10px] bg-[#111]" />
        <svg viewBox="0 0 10 10" className="ml-[34px] h-[11px] w-[11px]" fill="none" stroke="#111">
          <rect x="0.500" y="2.500" width="7" height="7" />
          <path d="M2.500 2.500v-2h7v7h-2" />
        </svg>
        <X className="ml-[33px] mr-[18px] h-[16px] w-[16px] text-[#111]" strokeWidth={1.1} />
      </div>
      <Toolbar />
      <div className="flex min-h-0 flex-1">
        <Library />
        <div className="flex min-w-0 flex-1 flex-col border-l-2 border-t border-[#70757c]">
          <Tabs />
          <div className="flex min-h-0 flex-1">
            <div className="flex min-w-0 flex-1 justify-center bg-black pl-[17px]">
              <GuestScreen />
            </div>
            <Scrollbar />
            <div className="w-[2px] shrink-0 bg-[#d5daed]" />
          </div>
        </div>
      </div>
      <div className="h-[2px] shrink-0 bg-[#fafafa]" />
      <StatusBar />
      <Taskbar />
    </div>
  );
}
